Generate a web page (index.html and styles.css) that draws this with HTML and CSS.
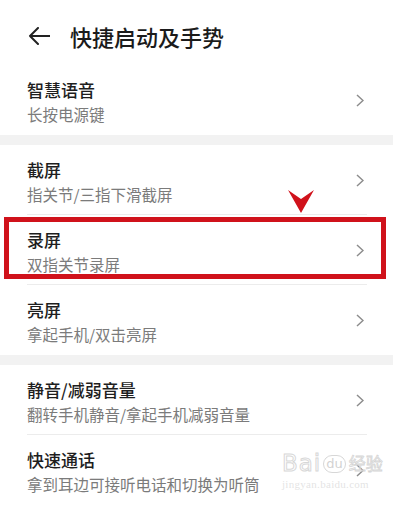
FILE: index.html
```html
<!DOCTYPE html>
<html lang="zh-CN">
<head>
<meta charset="utf-8">
<title>快捷启动及手势</title>
<link rel="stylesheet" href="styles.css">
</head>
<body>
<div class="page">
  <header class="header">
    <svg class="back" width="22" height="18" viewBox="0 0 22 18"><path d="M10 1 L2 9 L10 17 M2 9 H22" fill="none" stroke="#222" stroke-width="2" stroke-linecap="round" stroke-linejoin="round"/></svg>
    <h1 class="title">快捷启动及手势</h1>
  </header>

  <section class="group">
    <div class="row">
      <div class="texts"><div class="name">智慧语音</div><div class="desc">长按电源键</div></div>
      <svg class="chev" width="8" height="13" viewBox="0 0 8 13"><path d="M1 1 L7 6.5 L1 12" fill="none" stroke="#8c8c8c" stroke-width="1.5"/></svg>
    </div>
  </section>

  <section class="group">
    <div class="row">
      <div class="texts"><div class="name">截屏</div><div class="desc">指关节/三指下滑截屏</div></div>
      <svg class="chev" width="8" height="13" viewBox="0 0 8 13"><path d="M1 1 L7 6.5 L1 12" fill="none" stroke="#8c8c8c" stroke-width="1.5"/></svg>
    </div>
    <div class="row highlighted">
      <svg class="pointer" width="26" height="23" viewBox="0 0 26 23"><path d="M0 0 L13 9 L26 0 L13 23 Z" fill="#d0121b"/></svg>
      <div class="frame"></div>
      <div class="texts"><div class="name">录屏</div><div class="desc">双指关节录屏</div></div>
      <svg class="chev" width="8" height="13" viewBox="0 0 8 13"><path d="M1 1 L7 6.5 L1 12" fill="none" stroke="#8c8c8c" stroke-width="1.5"/></svg>
    </div>
    <div class="row">
      <div class="texts"><div class="name">亮屏</div><div class="desc">拿起手机/双击亮屏</div></div>
      <svg class="chev" width="8" height="13" viewBox="0 0 8 13"><path d="M1 1 L7 6.5 L1 12" fill="none" stroke="#8c8c8c" stroke-width="1.5"/></svg>
    </div>
  </section>

  <section class="group">
    <div class="row">
      <div class="texts"><div class="name">静音/减弱音量</div><div class="desc">翻转手机静音/拿起手机减弱音量</div></div>
      <svg class="chev" width="8" height="13" viewBox="0 0 8 13"><path d="M1 1 L7 6.5 L1 12" fill="none" stroke="#8c8c8c" stroke-width="1.5"/></svg>
    </div>
    <div class="row">
      <div class="texts"><div class="name">快速通话</div><div class="desc">拿到耳边可接听电话和切换为听筒</div></div>
      <svg class="chev" width="8" height="13" viewBox="0 0 8 13"><path d="M1 1 L7 6.5 L1 12" fill="none" stroke="#8c8c8c" stroke-width="1.5"/></svg>
      <div class="watermark">
        <div class="wm-top"><span class="wm-bai">Bai</span><span class="wm-du">du</span><span class="wm-jy">经验</span></div>
        <div class="wm-url">jingyan.baidu.com</div>
      </div>
    </div>
  </section>
</div>
</body>
</html>
```

FILE: styles.css
```css
* { box-sizing: border-box; margin: 0; padding: 0; }
html, body { background: #fff; }
body {
  width: 400px;
  height: 506px;
  overflow: hidden;
  font-family: "Noto Sans CJK SC", "Noto Sans", sans-serif;
}
.page {
  width: 393px;
  background: #f2f2f2;
}
.header {
  height: 65px;
  padding: 7px 0 0 28px;
  display: flex;
  align-items: center;
  gap: 20px;
  background: #fff;
}
.back { display: block; }
.title {
  font-size: 22px;
  font-weight: 500;
  color: #1b1b1b;
  line-height: 30px;
}
.group {
  background: #fff;
  margin-bottom: 10px;
}
.row {
  position: relative;
  height: 70px;
  padding: 0 29px 0 27px;
  display: flex;
  align-items: center;
  justify-content: space-between;
}
.row + .row::before {
  content: "";
  position: absolute;
  left: 27px;
  right: 26px;
  top: -1px;
  height: 1px;
  background: #ececec;
}
.texts {
  display: flex;
  flex-direction: column;
  padding-top: 3px;
}
.name {
  font-size: 17px;
  font-weight: 500;
  color: #1e1e1e;
  line-height: 22px;
}
.desc {
  font-size: 15.5px;
  color: #7b7b7b;
  line-height: 20px;
  margin-top: 3px;
}
.chev { display: block; flex: none; }
.frame {
  position: absolute;
  left: 4px;
  top: 2px;
  width: 382px;
  height: 62px;
  border: 5px solid #d0121b;
  z-index: 2;
}
.pointer {
  position: absolute;
  left: 288px;
  top: -25px;
  z-index: 3;
}
.watermark {
  position: absolute;
  left: 282px;
  top: 16px;
  color: rgba(215, 215, 215, 0.7);
  z-index: 3;
}
.wm-top {
  display: flex;
  align-items: flex-end;
  font-family: "DejaVu Sans", sans-serif;
  line-height: 24px;
}
.wm-bai {
  font-size: 23px;
  color: rgba(255, 255, 255, 0.6);
  -webkit-text-stroke: 1px rgba(205, 205, 205, 0.8);
  letter-spacing: 1px;
}
.wm-du {
  font-size: 13px;
  color: rgba(205, 205, 205, 0.9);
  border: 1px solid rgba(205, 205, 205, 0.8);
  border-radius: 10px;
  padding: 0 2px;
  line-height: 16px;
  margin: 0 3px 2px 2px;
}
.wm-jy {
  font-family: "Noto Sans CJK SC", sans-serif;
  font-size: 17px;
  color: rgba(255, 255, 255, 0.6);
  -webkit-text-stroke: 0.8px rgba(205, 205, 205, 0.85);
}
.wm-url {
  font-family: "Liberation Serif", serif;
  font-size: 11px;
  line-height: 14px;
  margin-top: 2px;
  letter-spacing: 0.3px;
}
```
